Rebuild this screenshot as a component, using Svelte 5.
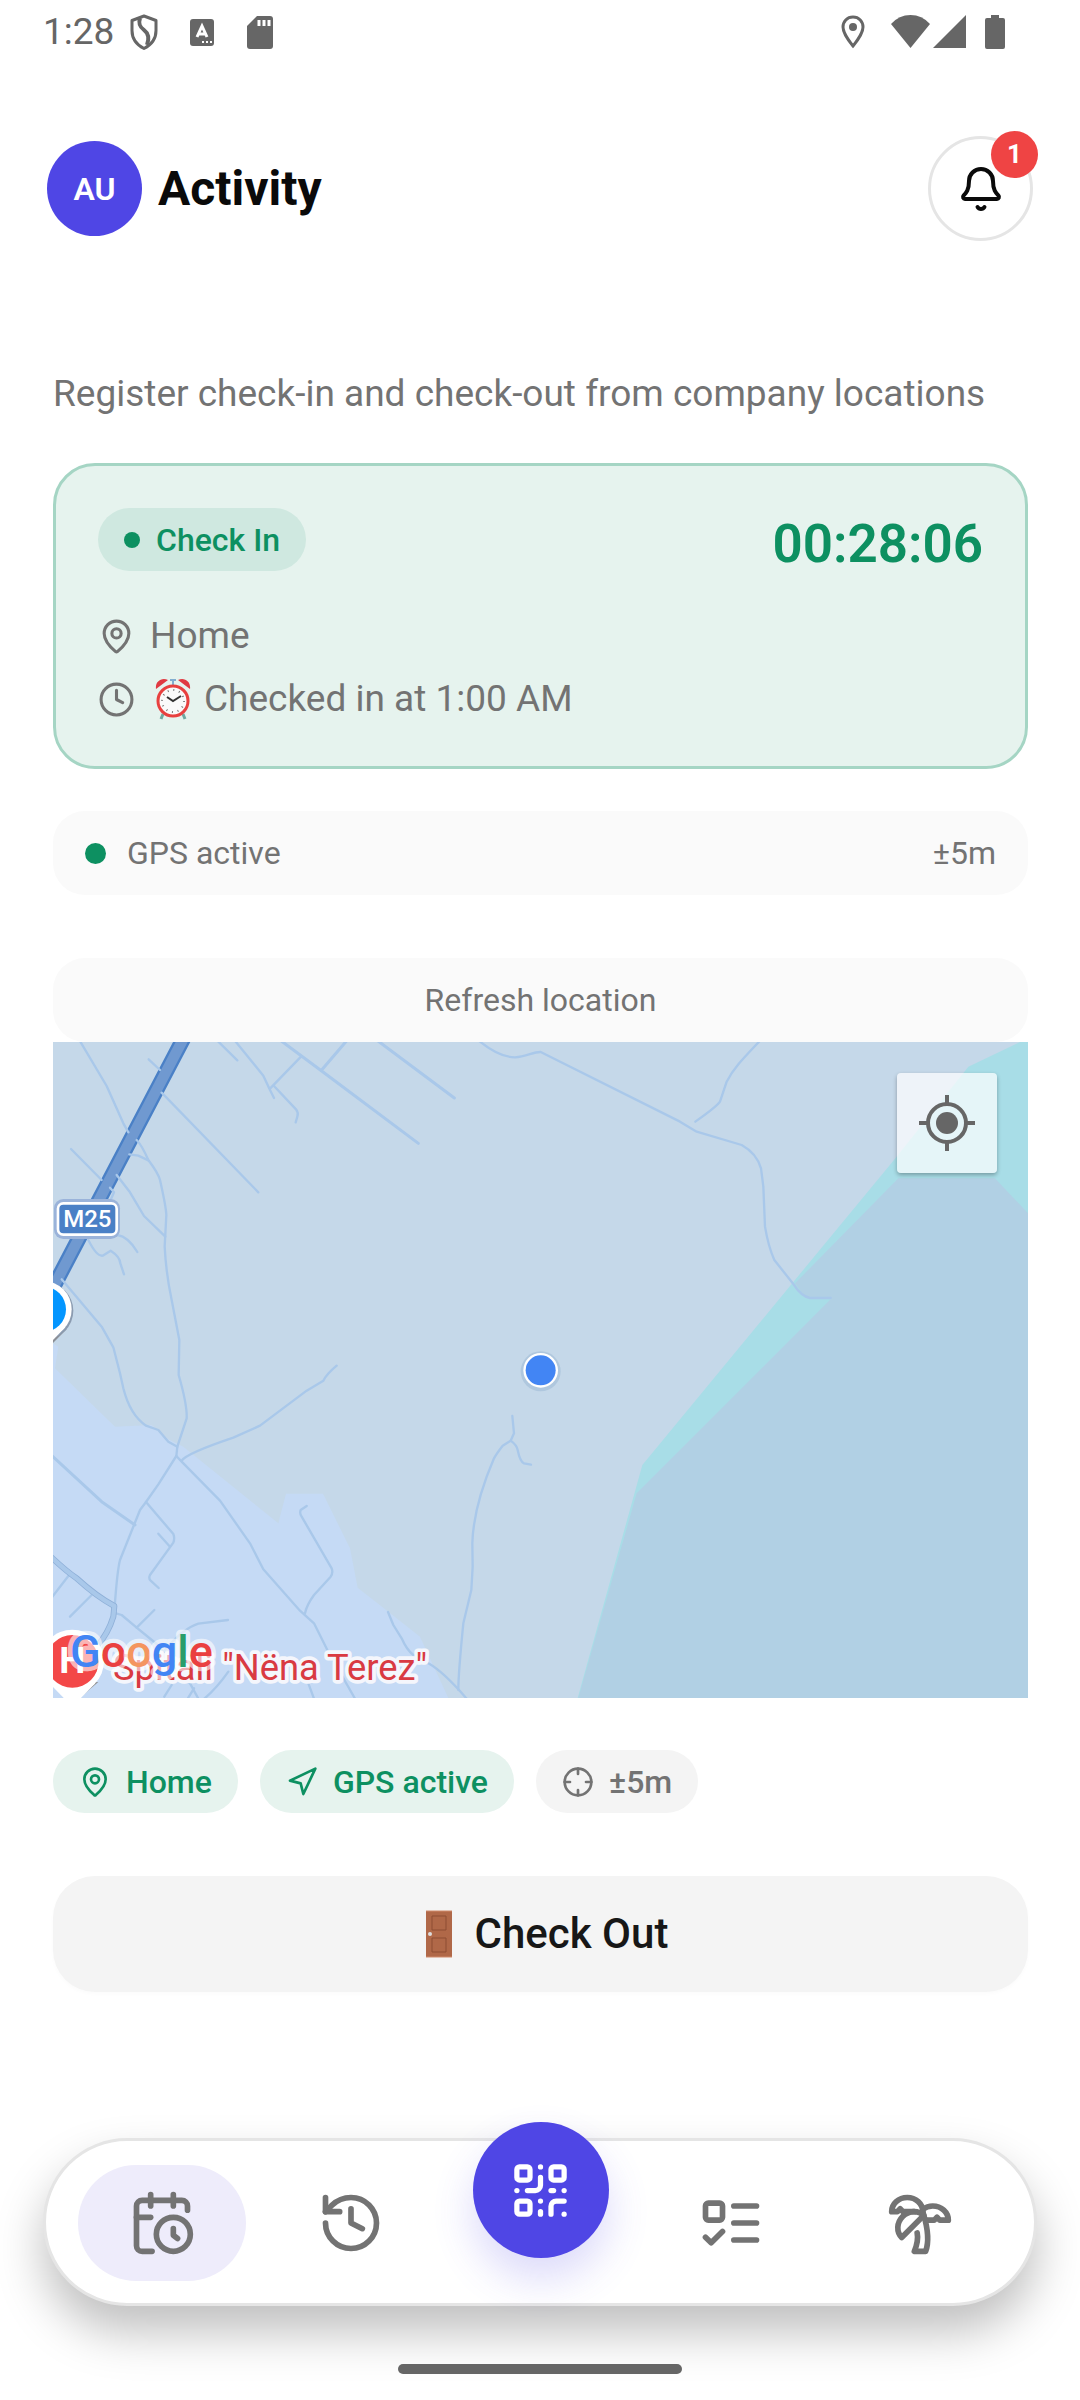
<script>
	const icons = {
		pin: [
			'M20 10c0 4.993-5.539 10.193-7.399 11.799a1 1 0 0 1-1.202 0C9.539 20.193 4 14.993 4 10a8 8 0 0 1 16 0',
			'M15 10a3 3 0 1 1-6 0a3 3 0 0 1 6 0'
		],
		clock: ['M22 12a10 10 0 1 1-20 0a10 10 0 0 1 20 0', 'M12 6v6l4 2'],
		bell: [
			'M10.268 21a2 2 0 0 0 3.464 0',
			'M3.262 15.326A1 1 0 0 0 4 17h16a1 1 0 0 0 .74-1.673C19.41 13.956 18 12.499 18 8A6 6 0 0 0 6 8c0 4.499-1.411 5.956-2.738 7.326'
		],
		navigation: ['M3 11 22 2l-9 19-2-8z'],
		crosshair: ['M22 12a10 10 0 1 1-20 0a10 10 0 0 1 20 0', 'M22 12h-4', 'M6 12H2', 'M12 6V2', 'M12 22v-4'],
		calendar: [
			'M21 7.5V6a2 2 0 0 0-2-2H5a2 2 0 0 0-2 2v14a2 2 0 0 0 2 2h3.5',
			'M16 2v4',
			'M8 2v4',
			'M3 10h5',
			'M17.5 17.5 16 16.3V14',
			'M22 16a6 6 0 1 1-12 0a6 6 0 0 1 12 0'
		],
		history: ['M3 12a9 9 0 1 0 9-9 9.75 9.75 0 0 0-6.74 2.74L3 8', 'M3 3v5h5', 'M12 7v5l4 2'],
		qr: [
			'M4 3h3a1 1 0 0 1 1 1v3a1 1 0 0 1-1 1H4a1 1 0 0 1-1-1V4a1 1 0 0 1 1-1z',
			'M17 3h3a1 1 0 0 1 1 1v3a1 1 0 0 1-1 1h-3a1 1 0 0 1-1-1V4a1 1 0 0 1 1-1z',
			'M4 16h3a1 1 0 0 1 1 1v3a1 1 0 0 1-1 1H4a1 1 0 0 1-1-1v-3a1 1 0 0 1 1-1z',
			'M21 16h-3a2 2 0 0 0-2 2v3',
			'M21 21v.01',
			'M12 7v3a2 2 0 0 1-2 2H7',
			'M3 12h.01',
			'M12 3h.01',
			'M12 16v.01',
			'M16 12h1',
			'M21 12v.01',
			'M12 21v-1'
		],
		tasks: [
			'M4 5h4a1 1 0 0 1 1 1v4a1 1 0 0 1-1 1H4a1 1 0 0 1-1-1V6a1 1 0 0 1 1-1z',
			'm3 17 2 2 4-4',
			'M13 6h8',
			'M13 12h8',
			'M13 18h8'
		],
		palm: [
			'M13 8c0-2.76-2.46-5-5.5-5S2 5.24 2 8h2l1-1 1 1h4',
			'M13 7.14A5.82 5.82 0 0 1 16.5 6c3.04 0 5.5 2.24 5.5 5h-3l-1-1-1 1h-3',
			'M5.89 9.71c-2.15 2.15-2.3 5.47-.35 7.43l4.24-4.25.7-.7.71-.71 2.12-2.12c-1.95-1.96-5.27-1.8-7.42.35',
			'M11 15.5c.5 2.5-.17 4.5-1 6.5h4c2-5.5-.5-12-1-14'
		]
	};

	const chips = [
		{ icon: 'pin', label: 'Home', active: true },
		{ icon: 'navigation', label: 'GPS active', active: true },
		{ icon: 'crosshair', label: '±5m', active: false }
	];

	const tabs = [
		{ icon: 'calendar', label: 'Activity', href: '#activity' },
		{ icon: 'history', label: 'History', href: '#history' },
		{ icon: 'qr', label: 'Scan', href: '#scan' },
		{ icon: 'tasks', label: 'Tasks', href: '#tasks' },
		{ icon: 'palm', label: 'Time off', href: '#time-off' }
	];

	let current = $state('calendar');

	// minor streets, upper part of the map
	const streets = [
		'M118 300L200 438L250 550L265 577',
		'M326 358L360 390',
		'M365 458L655 757',
		'M530 300L592 361',
		'M583 300L670 407L690 450L702 474',
		'M783 350L690 446',
		'M702 438L768 508Q776 518 772 530L767 547',
		'M1314 300C1350 330 1390 352 1425 352C1460 350 1480 335 1502 336L1920 545L1970 575L2105 615Q2150 640 2163 685L2170 740L2175 860Q2185 920 2203 960L2260 1032Q2285 1070 2310 1074L2372 1074',
		'M2162 300C2110 355 2080 385 2060 425L2040 485Q2030 500 1966 545',
		'M290 600Q305 615 325 660Q355 700 360 720Q378 800 379 825L374 920Q378 1000 395 1080L418 1200L416 1305Q442 1395 440 1435L412 1520L409 1548',
		'M268 643L295 647L325 661',
		'M230 705L270 757L312 828L376 890',
		'M93 627L185 720',
		'M210 743L222 757L212 780',
		'M145 900Q170 950 188 947L212 932Q240 950 241 970L252 1003',
		'M232 885Q265 890 292 936',
		'M65 1018L185 1160L220 1222L240 1300L250 1345Q270 1425 318 1457L355 1470L385 1505L412 1520'
	];

	// streets of the village in the lower left
	const village = [
		'M409 1548L355 1633L318 1686L300 1710L240 1860Q232 1890 224 2000',
		'M318 1686L400 1782Q405 1795 400 1808L330 1905Q325 1915 332 1922L356 1944',
		'M355 1781L390 1820',
		'M409 1548L425 1565L540 1682L630 1810L670 1888L780 2012L822 2050L862 2130L945 2276',
		'M425 1562Q440 1540 580 1493L660 1457L800 1352L850 1322Q860 1302 890 1277',
		'M800 1698L782 1710Q778 1720 785 1730L875 1885Q880 1898 872 1910L822 1965Q800 1995 795 2020',
		'M1417 1428L1422 1480L1412 1502L1388 1517Q1370 1540 1362 1555Q1300 1700 1297 1810L1298 1880L1294 1950L1270 2050Q1255 2200 1255 2250',
		'M1412 1502Q1430 1515 1433 1530Q1440 1565 1452 1570L1473 1574',
		'M1044 2016L1060 2055L1085 2095Q1100 2130 1120 2145L1165 2170Q1210 2195 1280 2276',
		'M85 1908L37 1970',
		'M155 1965L90 2030',
		'M228 2020L245 2025L290 2063L350 2112L450 2230L475 2276',
		'M290 2063L343 2010',
		'M564 2040L475 2051Q430 2065 375 2130',
		'M565 2195Q530 2245 493 2276',
		'M395 2235L373 2270',
		'M462 2245L443 2276',
		'M805 2230L822 2276'
	];

	const wideStreets = [
		'M720 300L845 393L1135 610',
		'M845 390L922 300',
		'M1010 300L1243 474',
		'M37 1548L185 1685L285 1755'
	];
</script>

{#snippet icon(name, size)}
	<svg
		class="icon"
		width={size}
		height={size}
		viewBox="0 0 24 24"
		fill="none"
		stroke="currentColor"
		stroke-width="2"
		stroke-linecap="round"
		stroke-linejoin="round"
		aria-hidden="true"
	>
		{#each icons[name] as d}
			<path {d} />
		{/each}
	</svg>
{/snippet}

<div class="app">
	<div class="status-bar">
		<span class="time">1:28</span>
		<div class="status-left">
			<svg width="34" height="36" viewBox="0 0 34 36" aria-hidden="true">
				<path d="M17 2 29 6.500v10C29 25 24 31 17 34.500 10 31 5 25 5 16.500v-10z" fill="none" stroke="#666" stroke-width="3" stroke-linejoin="round" />
				<path d="M13 4c-2 6 0 9 4 12s6 7 3 15" fill="none" stroke="#666" stroke-width="4" />
			</svg>
			<svg width="34" height="36" viewBox="0 0 34 36" aria-hidden="true">
				<rect x="5" y="5" width="24" height="27" rx="3" fill="#666" />
				<path d="M12 23 17 12l5 11M14 20h6" fill="none" stroke="#fff" stroke-width="3" />
				<path d="M17 28h2m2 0h2m2 0h2" stroke="#fff" stroke-width="2" />
			</svg>
			<svg width="34" height="36" viewBox="0 0 34 36" aria-hidden="true">
				<path d="M14 2h13a3 3 0 0 1 3 3v27a3 3 0 0 1-3 3H7a3 3 0 0 1-3-3V12z" fill="#666" />
				<path d="M16 6v6m5-6v6m5-6v6" stroke="#fff" stroke-width="3" />
			</svg>
		</div>
		<div class="status-right">
			<svg width="40" height="36" viewBox="0 0 40 36" aria-hidden="true">
				<path d="M20 3c-6 0-10 4.500-10 10 0 7 10 19 10 19s10-12 10-19c0-5.500-4-10-10-10z" fill="none" stroke="#666" stroke-width="3" />
				<circle cx="20" cy="13" r="4" fill="#666" />
			</svg>
			<svg width="76" height="36" viewBox="0 0 76 36" aria-hidden="true">
				<path d="M0 10Q8 1 19.500 1T39 10L19.500 34z" fill="#666" />
				<path d="M75 1v33H42z" fill="#666" />
			</svg>
			<svg width="20" height="36" viewBox="0 0 20 36" aria-hidden="true">
				<path d="M6 1h8v3h4a2 2 0 0 1 2 2v27a2 2 0 0 1-2 2H2a2 2 0 0 1-2-2V6a2 2 0 0 1 2-2h4z" fill="#666" />
			</svg>
		</div>
	</div>

	<header>
		<span class="avatar">AU</span>
		<h1>Activity</h1>
		<button class="bell" aria-label="Notifications">
			{@render icon('bell', 48)}
			<span class="count">1</span>
		</button>
	</header>

	<main>
		<p class="intro">Register check-in and check-out from company locations</p>

		<section class="card">
			<div class="card-head">
				<span class="state"><i class="dot small"></i>Check In</span>
				<time>00:28:06</time>
			</div>
			<div class="line">
				{@render icon('pin', 37)}
				<span>Home</span>
			</div>
			<div class="line">
				{@render icon('clock', 37)}
				<svg class="alarm" width="46" height="42" viewBox="0 0 46 42" aria-hidden="true">
					<path d="M13 36 11 41M33 36l2 5" stroke="#6fa8a0" stroke-width="3" />
					<path d="M20 2h6M23 2v5" stroke="#82aed0" stroke-width="2" />
					<path d="M6 11C5 4 11-1 18 2L6 11zM40 11C41 4 35-1 28 2l12 9z" fill="#e03a42" />
					<circle cx="23" cy="23" r="15" fill="#fafafa" stroke="#e8403f" stroke-width="3" />
					<circle cx="23" cy="23" r="11" fill="none" stroke="#777" stroke-width="2" stroke-dasharray="1 4.760" />
					<path d="m17 19 6 4 8-5" fill="none" stroke="#333" stroke-width="2" />
				</svg>
				<span>Checked in at 1:00 AM</span>
			</div>
		</section>

		<div class="gps">
			<i class="dot"></i>
			<span>GPS active</span>
			<span class="accuracy">±5m</span>
		</div>

		<button class="refresh">Refresh location</button>

		<div class="map">
			<svg class="map-canvas" viewBox="39 306 2925 1968" role="img" aria-label="Map">
				<rect x="39" y="306" width="2925" height="1968" fill="#c5d8e9" />
				<path d="M39 1210 55 1220 45 1285 225 1460 335 1455 385 1498 430 1520 715 1750 738 1661 849 1661 930 1825 953 1943 1045 2015 1140 2090 1225 2274H39z" fill="#c5daf5" />
				<path d="M2940 306 2785 380 2570 650 1807 1575 1613 2274H2964V306z" fill="#a8dde7" />
				<path d="M2575 715H2865L2964 820V2274H1615L1790 1660 2372 1078 2295 1070 2265 1030z" fill="#b1d0e4" />

				<g fill="none" stroke-linecap="round" stroke-linejoin="round">
					<path d="M436 285 20 1080" stroke="#4a80c6" stroke-width="46" />
					<path d="M436 285 20 1080" stroke="#7099d0" stroke-width="32" />
					<g stroke="#a9c8ea" stroke-width="7">
						{#each streets as d}
							<path {d} />
						{/each}
						{#each village as d}
							<path {d} />
						{/each}
					</g>
					<g stroke="#a9c8ea" stroke-width="9">
						{#each wideStreets as d}
							<path {d} />
						{/each}
					</g>
					<path d="M30 1848Q80 1895 110 1915Q170 1970 223 1998L220 2030Q205 2080 170 2120" stroke="#8fb0d8" stroke-width="18" />
					<path d="M30 1848Q80 1895 110 1915Q170 1970 223 1998L220 2030Q205 2080 170 2120" stroke="#a9c8ea" stroke-width="13" />
				</g>

				<path d="M80 1168 34 1214V1100z" fill="#8b8f96" />
				<circle cx="14" cy="1112" r="86" fill="#8b9bb0" />
				<path d="M76 1162 34 1205V1100z" fill="#fff" />
				<circle cx="10" cy="1108" r="85" fill="#fff" />
				<circle cx="10" cy="1108" r="68" fill="#0496ff" />

				<rect x="42" y="777" width="198" height="120" rx="28" fill="#9ab3da" />
				<rect x="54" y="790" width="176" height="94" rx="16" fill="#4a80c6" stroke="#fff" stroke-width="8" />
				<text class="road-label" x="142" y="861">M25</text>

				<path d="M36 2236 100 2290 175 2226z" fill="#8f8f8f" />
				<circle cx="97" cy="2164" r="95" fill="#fff" />
				<path d="M30 2232 97 2300 166 2230z" fill="#fff" />
				<circle cx="97" cy="2164" r="79" fill="#f34848" />
				<text class="hospital" x="97" y="2198">H</text>
				<text class="place" x="219" y="2220">Spitali "Nëna Terez"</text>

				<text class="logo" x="90" y="2180"><tspan fill="#4285f4">G</tspan><tspan fill="#ea4040">o</tspan><tspan fill="#f4955f">o</tspan><tspan fill="#4285f4">g</tspan><tspan fill="#2a9d6a">l</tspan><tspan fill="#ea4040">e</tspan></text>

				<circle cx="1502" cy="1294" r="60" fill="#8fb0cc" opacity="0.4" />
				<circle cx="1502" cy="1291" r="52" fill="#fff" />
				<circle cx="1502" cy="1291" r="45" fill="#4285f4" />
			</svg>
			<button class="locate" aria-label="My location">
				<svg width="56" height="56" viewBox="0 0 56 56" aria-hidden="true">
					<circle cx="28" cy="28" r="19" fill="none" stroke="#666" stroke-width="4" />
					<circle cx="28" cy="28" r="11" fill="#666" />
					<path d="M28 0v8M28 48v8M0 28h8M48 28h8" stroke="#666" stroke-width="4" />
				</svg>
			</button>
		</div>

		<div class="chips">
			{#each chips as chip}
				<span class="chip" class:active={chip.active}>
					{@render icon(chip.icon, 32)}
					{chip.label}
				</span>
			{/each}
		</div>

		<button class="checkout">
			<svg width="52" height="48" viewBox="-12 0 52 48" aria-hidden="true">
				<rect x="1" y="1" width="26" height="46" fill="#b06848" />
				<path d="M1 1h26M1 47h26" stroke="#d08a6a" stroke-width="1" />
				<path d="M7 6h14v14H7zM7 28h14v14H7z" fill="none" stroke="#8d4d33" stroke-width="1" />
				<circle cx="5" cy="24" r="2" fill="#ddd" />
			</svg>
			Check Out
		</button>
	</main>

	<footer>
		<nav>
			{#each tabs as tab}
				<a
					href={tab.href}
					class:selected={tab.icon === current}
					class:scan={tab.icon === 'qr'}
					aria-label={tab.label}
					onclick={() => (current = tab.icon)}
				>
					{@render icon(tab.icon, tab.icon === 'qr' ? 63 : 68)}
				</a>
			{/each}
		</nav>
		<div class="home-indicator"></div>
	</footer>
</div>

<style>
	:global(body) {
		margin: 0;
		background: #fff;
	}
	.app {
		display: flex;
		flex-direction: column;
		min-height: 100vh;
		font-family: Roboto, 'Liberation Sans', sans-serif;
		font-size: 37px;
		line-height: 50px;
		color: #737373;
		box-sizing: border-box;
		overflow: hidden;
	}
	button {
		font: inherit;
		color: inherit;
		border: none;
		padding: 0;
		cursor: pointer;
	}
	.icon {
		display: block;
		flex: none;
	}

	.status-bar {
		display: flex;
		align-items: center;
		height: 63px;
		padding: 0 75px 0 43px;
		font-size: 37px;
		color: #666;
	}
	.status-bar svg {
		display: block;
	}
	.status-left {
		display: flex;
		gap: 24px;
		margin-left: 13px;
	}
	.status-right {
		display: flex;
		gap: 18px;
		margin-left: auto;
	}

	header {
		display: flex;
		align-items: center;
		gap: 16px;
		padding: 73px 47px 0;
	}
	.avatar {
		display: flex;
		align-items: center;
		justify-content: center;
		width: 95px;
		height: 95px;
		border-radius: 50%;
		background: #4f46e5;
		color: #fff;
		font-size: 32px;
		font-weight: 600;
	}
	h1 {
		margin: 0;
		font-size: 48px;
		font-weight: 700;
		color: #0a0a0a;
	}
	.bell {
		position: relative;
		display: flex;
		align-items: center;
		justify-content: center;
		width: 105px;
		height: 105px;
		box-sizing: border-box;
		margin-left: auto;
		border: 3px solid #e5e5e5;
		border-radius: 50%;
		background: #fff;
		color: #0a0a0a;
	}
	.count {
		position: absolute;
		top: -8px;
		right: -8px;
		width: 47px;
		height: 47px;
		border-radius: 50%;
		background: #ef4444;
		color: #fff;
		font-size: 26px;
		font-weight: 700;
		line-height: 47px;
	}

	main {
		display: flex;
		flex-direction: column;
		padding: 128px 52px 0 53px;
	}
	.intro {
		margin: 0 0 44px;
	}
	.card {
		display: flex;
		flex-direction: column;
		gap: 13px;
		padding: 42px;
		border: 3px solid #a5d5c4;
		border-radius: 42px;
		background: #e6f3ee;
	}
	.card-head {
		display: flex;
		align-items: flex-start;
		justify-content: space-between;
		margin-bottom: 18px;
	}
	.state {
		display: flex;
		align-items: center;
		gap: 16px;
		height: 63px;
		padding: 0 26px;
		border-radius: 32px;
		background: #cfe8e0;
		color: #0d9061;
		font-size: 32px;
		font-weight: 500;
	}
	.dot {
		width: 21px;
		height: 21px;
		border-radius: 50%;
		background: #0d9061;
	}
	.dot.small {
		width: 16px;
		height: 16px;
	}
	time {
		font-size: 53px;
		font-weight: 600;
		line-height: 72px;
		color: #0d9061;
	}
	.line {
		display: flex;
		align-items: center;
		gap: 15px;
	}
	.alarm {
		margin-right: -7px;
	}

	.gps {
		display: flex;
		align-items: center;
		gap: 21px;
		height: 84px;
		margin-top: 42px;
		padding: 0 32px;
		border-radius: 32px;
		background: #fafafa;
		font-size: 32px;
	}
	.accuracy {
		margin-left: auto;
	}
	.refresh {
		height: 84px;
		margin-top: 63px;
		border-radius: 32px;
		background: #fafafa;
		font-size: 32px;
	}

	.map {
		position: relative;
	}
	.map-canvas {
		display: block;
		width: 100%;
	}
	/* map units are a third of a pixel */
	.road-label {
		font-size: 72px;
		font-weight: 500;
		fill: #fff;
		text-anchor: middle;
	}
	.hospital {
		font-size: 111px;
		font-weight: 700;
		fill: #fff;
		text-anchor: middle;
	}
	.place {
		font-size: 109px;
		fill: #d93a42;
		stroke: #f4f6fc;
		stroke-width: 22px;
		stroke-linejoin: round;
		paint-order: stroke;
	}
	.logo {
		font-size: 135px;
		font-weight: 500;
		stroke: rgba(255, 255, 255, 0.6);
		stroke-width: 26px;
		stroke-linejoin: round;
		paint-order: stroke;
	}
	.locate {
		position: absolute;
		top: 31px;
		right: 31px;
		display: flex;
		align-items: center;
		justify-content: center;
		width: 100px;
		height: 100px;
		border-radius: 4px;
		background: rgba(255, 255, 255, 0.7);
		box-shadow: 0 2px 4px rgba(0, 0, 0, 0.3);
	}

	.chips {
		display: flex;
		flex-wrap: wrap;
		gap: 22px;
		margin-top: 52px;
	}
	.chip {
		display: flex;
		align-items: center;
		gap: 15px;
		height: 63px;
		padding: 0 26px;
		border-radius: 32px;
		background: #f4f4f4;
		font-size: 32px;
		font-weight: 500;
	}
	.chip.active {
		background: #e6f3ee;
		color: #0d9061;
	}
	.checkout {
		display: flex;
		align-items: center;
		justify-content: center;
		gap: 10px;
		height: 116px;
		margin-top: 63px;
		border-radius: 42px;
		background: #f4f4f4;
		box-shadow: 0 2px 4px rgba(0, 0, 0, 0.02);
		color: #171717;
		font-size: 42px;
		font-weight: 500;
	}

	footer {
		margin-top: auto;
		padding: 44px 43px 26px;
	}
	nav {
		display: grid;
		grid-template-columns: repeat(5, 1fr);
		align-items: center;
		justify-items: center;
		height: 168px;
		box-sizing: border-box;
		padding: 2px 19px 0 21px;
		border: 3px solid #e5e5e5;
		border-radius: 84px;
		background: #fff;
		box-shadow: 0 26px 47px rgba(0, 0, 0, 0.25);
	}
	nav a {
		display: flex;
		align-items: center;
		justify-content: center;
		width: 168px;
		height: 116px;
		border-radius: 58px;
		color: #737373;
	}
	nav a.selected {
		background: #eeecfb;
	}
	nav a.scan {
		width: 136px;
		height: 136px;
		margin: -33px 0 33px;
		border-radius: 50%;
		background: #4f46e5;
		box-shadow: 0 21px 42px rgba(79, 70, 229, 0.2);
		color: #fff;
	}
	.home-indicator {
		width: 284px;
		height: 10px;
		margin: 58px auto 0;
		border-radius: 5px;
		background: #666;
	}
</style>
